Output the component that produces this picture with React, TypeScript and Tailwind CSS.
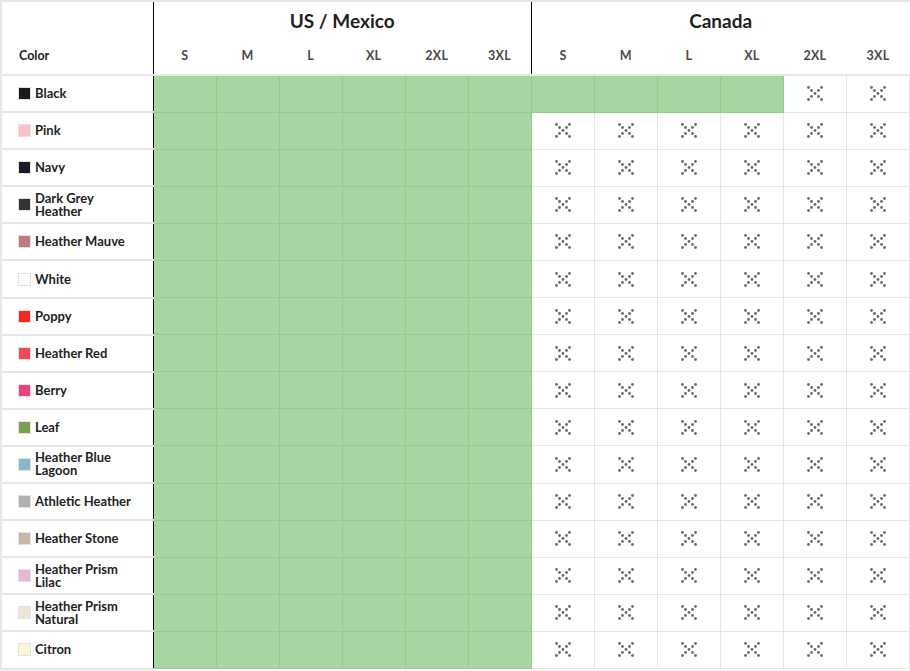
import React from "react";

const sizes = ["S", "M", "L", "XL", "2XL", "3XL"];

const colors: { name: string; swatch: string; canada: number }[] = [
  { name: "Black", swatch: "#1a1a1a", canada: 4 },
  { name: "Pink", swatch: "#f9c1cc", canada: 0 },
  { name: "Navy", swatch: "#1a1a28", canada: 0 },
  { name: "Dark Grey Heather", swatch: "#333333", canada: 0 },
  { name: "Heather Mauve", swatch: "#c07a7c", canada: 0 },
  { name: "White", swatch: "#ffffff", canada: 0 },
  { name: "Poppy", swatch: "#f52a1f", canada: 0 },
  { name: "Heather Red", swatch: "#ef4b52", canada: 0 },
  { name: "Berry", swatch: "#ea4184", canada: 0 },
  { name: "Leaf", swatch: "#78a04e", canada: 0 },
  { name: "Heather Blue Lagoon", swatch: "#8ab8c4", canada: 0 },
  { name: "Athletic Heather", swatch: "#b0b0b0", canada: 0 },
  { name: "Heather Stone", swatch: "#c9b6a6", canada: 0 },
  { name: "Heather Prism Lilac", swatch: "#e6b7d6", canada: 0 },
  { name: "Heather Prism Natural", swatch: "#efe4d8", canada: 0 },
  { name: "Citron", swatch: "#fdf5d4", canada: 0 },
];

// dotted cross shown for sizes that aren't available
function NotAvailable() {
  const dots = [
    [1.5, 1.5], [4.5, 4.5], [8, 7.5], [11.5, 10.5], [14.5, 13.5],
    [14.5, 1.5], [11.5, 4.5], [4.5, 10.5], [1.5, 13.5],
  ];
  return (
    <svg width="16" height="15" viewBox="0 0 16 15" className="mx-auto block">
      {dots.map(([x, y], i) => (
        <circle key={i} cx={x} cy={y} r="1.4" fill="#6a6a6a" />
      ))}
    </svg>
  );
}

export default function App() {
  return (
    <div
      className="min-h-screen bg-[#f6f6f6]"
      style={{ fontFamily: "Lato, 'Liberation Sans', sans-serif" }}
    >
      <table className="w-[910px] table-fixed border-collapse bg-white">
        <colgroup>
          <col className="w-[152px]" />
          {Array.from({ length: 12 }).map((_, i) => (
            <col key={i} className="w-[63px]" />
          ))}
        </colgroup>
        <thead>
          <tr className="h-[40px]">
            <th className="border-t-2 border-l-2 border-[#e6e6e6]" />
            <th
              colSpan={6}
              className="border-t-2 border-l border-t-[#e6e6e6] border-l-black text-center text-[19px] font-bold text-[#1e1e1e]"
            >
              US / Mexico
            </th>
            <th
              colSpan={6}
              className="border-t-2 border-l border-t-[#e6e6e6] border-l-black text-center text-[19px] font-bold text-[#1e1e1e]"
            >
              Canada
            </th>
          </tr>
          <tr className="h-[34px] border-b-2 border-[#e6e6e6]">
            <th className="border-l-2 border-[#e6e6e6] pb-[3px] pl-[17px] text-left text-[12.5px] font-bold text-[#1e1e1e]">
              Color
            </th>
            {[...sizes, ...sizes].map((s, i) => (
              <th
                key={i}
                className={
                  "pb-[2px] text-center text-[12.5px] font-bold tracking-[0.3px] text-[#4a4a4a] " +
                  (i === 0 || i === 6 ? "border-l border-l-black" : "")
                }
              >
                {s}
              </th>
            ))}
          </tr>
        </thead>
        <tbody>
          {colors.map((c) => (
            <tr key={c.name} className="h-[37.1px]">
              <td className="border-b-2 border-l-2 border-[#e6e6e6] pl-[16px]">
                <div className="flex items-center gap-[4px]">
                  <span
                    className="h-[13px] w-[13px] shrink-0 border border-[#e2e2e2]"
                    style={{ backgroundColor: c.swatch }}
                  />
                  <span className="max-w-[100px] text-[13px] leading-[13px] font-bold text-[#1e1e1e]">
                    {c.name}
                  </span>
                </div>
              </td>
              {sizes.map((s, i) => (
                <td
                  key={"us" + s}
                  className={
                    "border border-[#97ca91] bg-[#a6d7a1] " +
                    (i === 0 ? "border-l-black" : "")
                  }
                />
              ))}
              {sizes.map((s, i) =>
                i < c.canada ? (
                  <td
                    key={"ca" + s}
                    className={
                      "border border-[#97ca91] bg-[#a6d7a1] " +
                      (i === 0 ? "border-l-black" : "")
                    }
                  />
                ) : (
                  <td
                    key={"ca" + s}
                    className={
                      "border border-[#e6e6e6] " +
                      (i === 0 ? "border-l-black" : "")
                    }
                  >
                    <NotAvailable />
                  </td>
                )
              )}
            </tr>
          ))}
        </tbody>
      </table>
    </div>
  );
}
